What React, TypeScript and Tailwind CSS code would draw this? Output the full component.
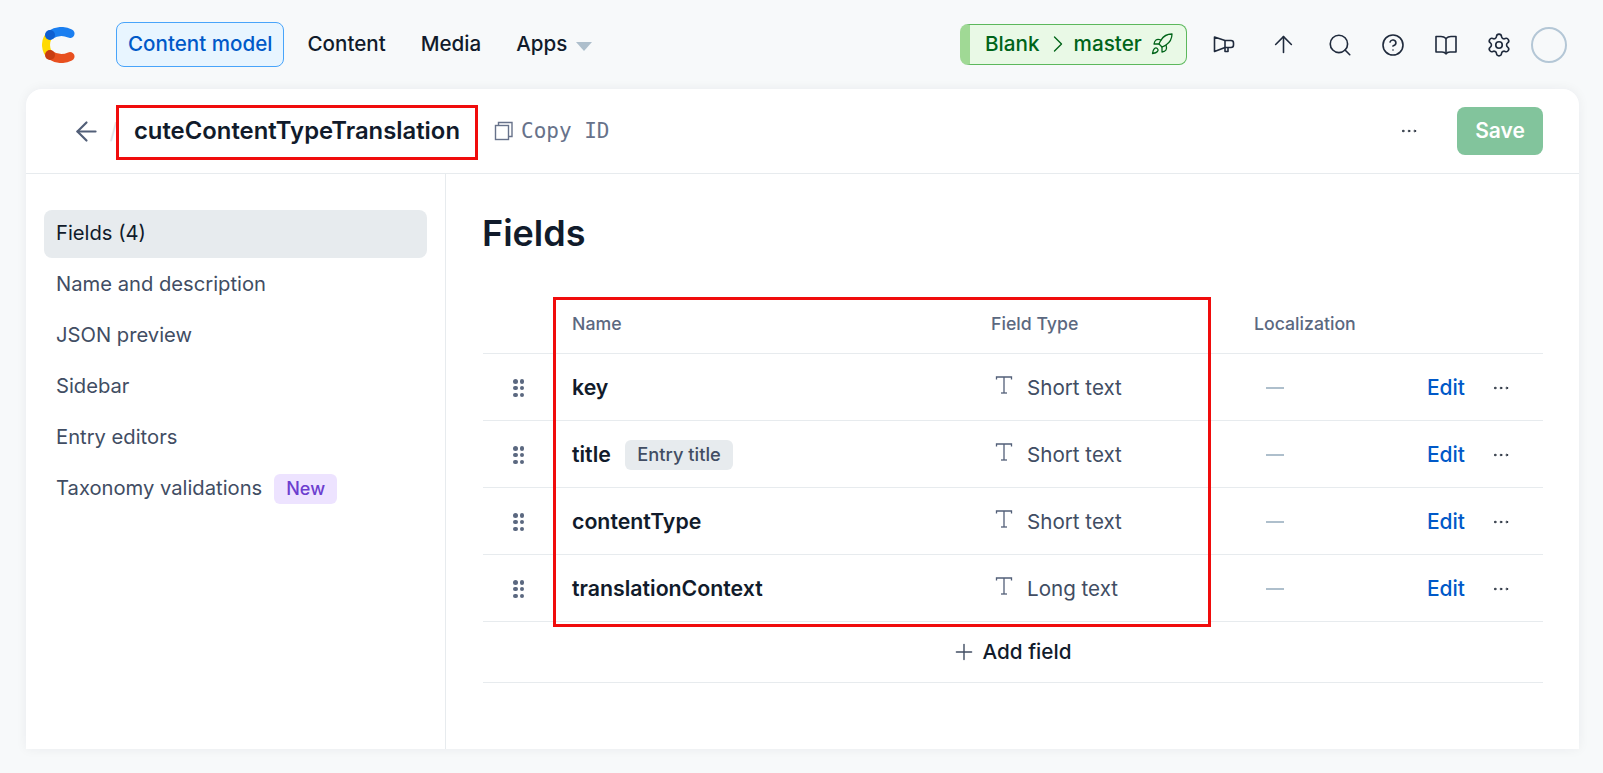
import { ArrowLeft, ArrowUp, ChevronRight, CircleHelp, Ellipsis, Plus, Rocket, Search, Settings } from 'lucide-react';

const fields = [
  { name: 'key', type: 'Short text' },
  { name: 'title', type: 'Short text', badge: 'Entry title' },
  { name: 'contentType', type: 'Short text' },
  { name: 'translationContext', type: 'Long text' },
];

const sideItems = ['Name and description', 'JSON preview', 'Sidebar', 'Entry editors'];

function Logo() {
  return (
    <svg width="33" height="36" viewBox="0 0 33 36" fill="none">
      <path d="M6 10 Q2 18 6 26" stroke="#ffda00" strokeWidth="8" />
      <path d="M8 8 Q18 1.8 28 6.5" stroke="#1b7ff0" strokeWidth="9" strokeLinecap="round" />
      <path d="M8 28 Q18 34.2 28 29.5" stroke="#e8501f" strokeWidth="9" strokeLinecap="round" />
      <circle cx="8" cy="8" r="5" fill="#0f5fd0" />
      <circle cx="8" cy="28" r="5" fill="#c83c12" />
    </svg>
  );
}

function Megaphone() {
  return (
    <svg width="22" height="22" viewBox="0 0 22 22" fill="none" stroke="#1f2a3c" strokeWidth="1.6" strokeLinejoin="round">
      <path d="M1.5 3 L12 6.5 H18 Q20.5 6.5 20.5 9 V11 Q20.5 13.5 18 13.5 H12 L1.5 17.5 Z" />
      <path d="M12 6.5 V13.5" />
      <path d="M12 14 V17.5 H15 V14" />
    </svg>
  );
}

function BookIcon() {
  return (
    <svg width="22" height="22" viewBox="0 0 22 22" fill="none" stroke="#1f2a3c" strokeWidth="1.6" strokeLinejoin="round">
      <path d="M11 4.5 Q9 2.5 6 2.5 H1 V18 H7 Q10 18 11 20 Q12 18 15 18 H21 V2.5 H16 Q13 2.5 11 4.5 Z" />
      <path d="M11 4.5 V20" />
    </svg>
  );
}

function CopyIcon() {
  return (
    <svg width="20" height="20" viewBox="0 0 20 20" fill="none" stroke="#67728a" strokeWidth="1.4">
      <rect x="1.5" y="4.5" width="13" height="14" />
      <path d="M4.5 4.5 V1.5 H18 V15.5 H14.5" />
    </svg>
  );
}

function TextIcon() {
  return (
    <svg width="22" height="22" viewBox="0 0 22 22" fill="none" stroke="#525f78" strokeWidth="1.3" className="mb-[6px]">
      <path d="M3.5 5.5 V3 H18.5 V5.5" />
      <path d="M11 3 V19" />
      <path d="M8 19 H14" />
    </svg>
  );
}

function Grip() {
  return (
    <div className="w-fit grid grid-cols-2 gap-x-[2px] gap-y-[2.25px]">
      {[0, 1, 2, 3, 4, 5].map((i) => (
        <span key={i} className="w-[4.5px] h-[4.5px] rounded-full bg-[#5b6880]" />
      ))}
    </div>
  );
}

export default function App() {
  return (
    <div className="w-[1603px] h-[773px] overflow-hidden bg-[#f7f9fa] font-['Inter',sans-serif] text-[#111b2b]">
      {/* Top nav */}
      <header className="h-[89px] flex items-center pl-[42px] pr-[36px]">
        <Logo />
        <nav className="flex items-center ml-[41px] text-[20.6px] font-medium">
          <a className="h-[45px] px-[11px] pb-[1px] flex items-center rounded-lg border border-[#48a4fa] bg-[#e8f5ff] text-[#0059c8]">
            Content model
          </a>
          <a className="ml-[23px] pb-[1px]">Content</a>
          <a className="ml-[35px] pb-[1px]">Media</a>
          <a className="ml-[35px] pb-[1px]">Apps</a>
          <span className="ml-[9px] mt-1 w-0 h-0 border-x-[8px] border-x-transparent border-t-[9px] border-t-[#aebfcc]" />
        </nav>
        <div className="ml-auto flex items-center">
          <div className="h-[41px] w-[227px] flex items-center rounded-lg border border-[#5cb85c] border-l-[10px] border-l-[#a0d995] bg-[#e9f9e6] pl-[15px] pb-[1px] text-[#006419] text-[20.7px] font-medium">
            Blank
            <ChevronRight size={28} strokeWidth={1.2} className="ml-[4px]" />
            <span className="ml-[2px]">master</span>
            <Rocket size={24} strokeWidth={1.3} className="ml-[8px]" />
          </div>
          <div className="flex items-center text-[#1f2a3c]">
            <span className="ml-[26px]"><Megaphone /></span>
            <ArrowUp size={27} strokeWidth={1.4} className="ml-[34.5px]" />
            <Search size={26} strokeWidth={1.5} className="ml-[30.5px]" />
            <CircleHelp size={24} strokeWidth={1.6} className="ml-[28px]" />
            <span className="ml-[30px]"><BookIcon /></span>
            <Settings size={26} strokeWidth={1.5} className="ml-[29px]" />
            <span className="ml-[19px] w-[36px] h-[36px] rounded-full border-2 border-[#b4c7d6]" />
          </div>
        </div>
      </header>

      {/* Card */}
      <main className="relative mx-[26px] w-[1553px] h-[660px] bg-white rounded-t-2xl shadow-[0_0_12px_rgba(25,37,50,0.06)] flex flex-col">
        <div className="h-[85px] flex items-center border-b border-[#e7ebee] pl-[44.5px] pr-[36px]">
          <ArrowLeft size={31} strokeWidth={1.7} className="text-[#525f78]" />
          <span className="ml-[8px] text-[#dfe5e8] text-[22px]">/</span>
          <h1 className="ml-[16.5px] text-[23.85px] font-semibold">cuteContentTypeTranslation</h1>
          <span className="ml-[34px]"><CopyIcon /></span>
          <span className="ml-[7px] pt-[1px] font-['DejaVu_Sans_Mono',monospace] text-[21px] text-[#67728a]">Copy ID</span>
          <Ellipsis size={20} strokeWidth={1.1} className="ml-auto mr-[38px] text-[#111b2b]" />
          <button className="w-[86px] h-[48px] rounded-lg bg-[#82c49c] text-white text-[21px] font-semibold">Save</button>
        </div>

        <div className="flex flex-1 min-h-0">
          <aside className="w-[420px] border-r border-[#e7ebee] pt-[36px] pl-[18px] pr-[18px] text-[20.2px] text-[#414d63] shrink-0">
            <div className="h-[48px] flex items-center px-[12px] pb-[1px] rounded-lg bg-[#e7ebee] text-[#111b2b]">Fields (4)</div>
            {sideItems.map((item) => (
              <div key={item} className="h-[48px] mt-[3px] flex items-center px-[12px] pb-[1px]">{item}</div>
            ))}
            <div className="h-[48px] mt-[3px] flex items-center px-[12px] pb-[1px]">
              Taxonomy validations
              <span className="ml-[12px] h-[30px] px-[12px] flex items-center rounded-md bg-[#ede3ff] text-[#6c3ecf] text-[18px] font-medium">New</span>
            </div>
          </aside>

          <section className="flex-1 pl-[37px] pr-[36px] pt-[35px]">
            <h2 className="-ml-[1px] text-[36px] font-semibold leading-[48px]">Fields</h2>
            <div className="mt-[32px] border-b border-[#e7ebee]">
              <div className="h-[65px] pt-[6px] grid grid-cols-[89px_419px_263px_1fr] items-center border-b border-[#e7ebee] text-[17.7px] font-medium text-[#5b6880]">
                <span />
                <span>Name</span>
                <span>Field Type</span>
                <span>Localization</span>
              </div>
              {fields.map((f) => (
                <div key={f.name} className="h-[67px] pt-[2px] grid grid-cols-[89px_419px_263px_1fr] items-center border-b border-[#e7ebee] text-[20.6px]">
                  <span className="pl-[30px]"><Grip /></span>
                  <span className="flex items-center font-semibold text-[21.3px]">
                    {f.name}
                    {f.badge && (
                      <span className="ml-[14px] h-[30px] px-[12.5px] flex items-center rounded-md bg-[#e7ebee] text-[#414d63] text-[18.3px] font-medium">{f.badge}</span>
                    )}
                  </span>
                  <span className="flex items-center text-[#414d63] pl-[2px]">
                    <TextIcon />
                    <span className="ml-[12px]">{f.type}</span>
                  </span>
                  <span className="flex items-center pl-[12px]">
                    <span className="w-[18px] h-[2px] bg-[#aebfcc]" />
                    <span className="ml-auto text-[#0059c8] font-medium text-[21px]">Edit</span>
                    <Ellipsis size={20} strokeWidth={1.1} className="ml-[26px] mr-[32px]" />
                  </span>
                </div>
              ))}
              <div className="h-[60px] pr-[4px] flex items-center justify-center text-[20.7px] font-medium">
                <Plus size={26} strokeWidth={1.3} className="mr-[6px] text-[#414d63]" />
                Add field
              </div>
            </div>
          </section>
        </div>
      </main>

      {/* Red annotation boxes */}
      <div className="absolute left-[116px] top-[105px] w-[362px] h-[55px] border-[3px] border-[#f00c0c]" />
      <div className="absolute left-[553px] top-[297px] w-[658px] h-[330px] border-[3px] border-[#f00c0c]" />
    </div>
  );
}
